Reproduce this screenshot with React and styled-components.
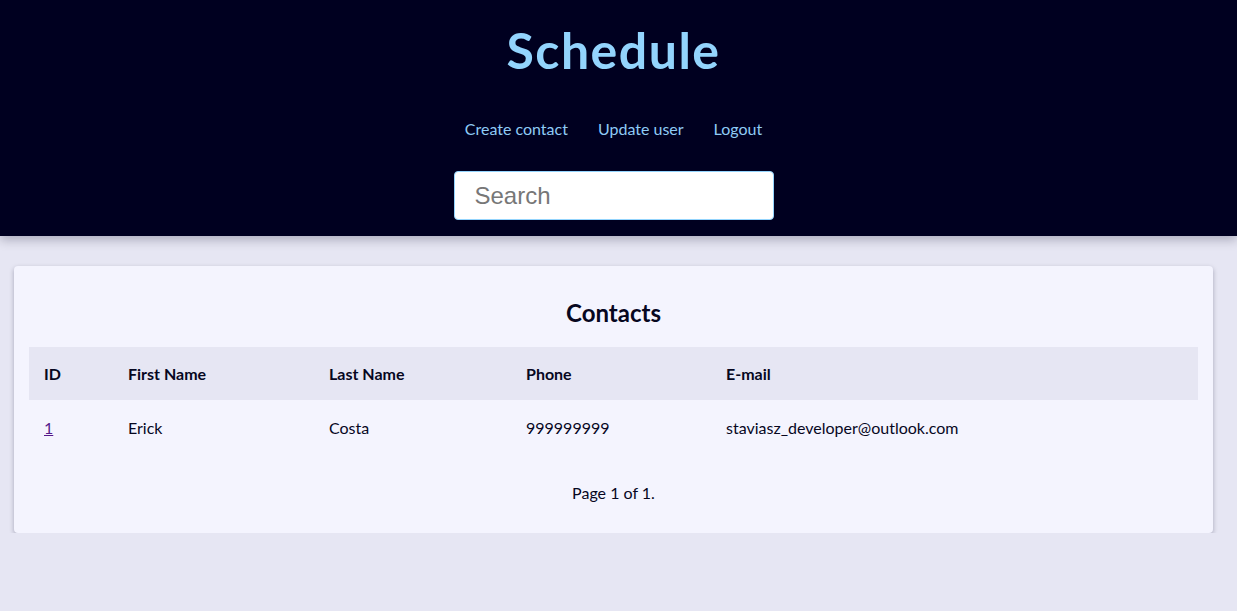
import React from "react";
import styled, { createGlobalStyle } from "styled-components";

const contacts = [
  { id: 1, firstName: "Erick", lastName: "Costa", phone: "999999999", email: "staviasz_developer@outlook.com" },
];

const columns = [
  { label: "ID", width: 84 },
  { label: "First Name", width: 201 },
  { label: "Last Name", width: 197 },
  { label: "Phone", width: 200 },
  { label: "E-mail", width: null },
];

const App = () => {
  return (
    <>
      <GlobalStyle />
      <Header>
        <Title>Schedule</Title>
        <Nav>
          <NavLink href="#">Create contact</NavLink>
          <NavLink href="#">Update user</NavLink>
          <NavLink href="#">Logout</NavLink>
        </Nav>
        <SearchInput placeholder="Search" />
      </Header>
      <Main>
        <Card>
          <CardTitle>Contacts</CardTitle>
          <Table>
            <colgroup>
              {columns.map((c) => (
                <col key={c.label} style={c.width ? { width: c.width } : undefined} />
              ))}
            </colgroup>
            <thead>
              <HeadRow>
                {columns.map((c) => (
                  <Th key={c.label}>{c.label}</Th>
                ))}
              </HeadRow>
            </thead>
            <tbody>
              {contacts.map((c) => (
                <tr key={c.id}>
                  <Td>
                    <IdLink href="#">{c.id}</IdLink>
                  </Td>
                  <Td>{c.firstName}</Td>
                  <Td>{c.lastName}</Td>
                  <Td>{c.phone}</Td>
                  <Td>{c.email}</Td>
                </tr>
              ))}
            </tbody>
          </Table>
          <Pager>Page 1 of 1.</Pager>
        </Card>
      </Main>
    </>
  );
};

const GlobalStyle = createGlobalStyle`
  * { box-sizing: border-box; }
  body {
    margin: 0;
    background: #e6e6f3;
    font-family: Lato, "Open Sans", sans-serif;
    color: #07071f;
  }
`;

const Header = styled.header`
  background: #000020;
  height: 236px;
  padding: 20px 10px 16px 0;
  display: flex;
  flex-direction: column;
  align-items: center;
  box-shadow: 0 4px 10px rgba(0, 0, 32, 0.25);
`;

const Title = styled.h1`
  margin: 0;
  font-size: 50px;
  line-height: 60px;
  font-weight: 700;
  letter-spacing: 1.5px;
  color: #93d4fd;
`;

const Nav = styled.nav`
  margin-top: 39px;
  display: flex;
  gap: 30px;
`;

const NavLink = styled.a`
  font-size: 16px;
  line-height: 20px;
  color: #8fcbf5;
  text-decoration: none;
`;

const SearchInput = styled.input`
  margin-top: 32px;
  width: 320px;
  height: 50px;
  border: 1px solid #93d4fd;
  border-radius: 4px;
  padding: 0 20px;
  font-family: "Liberation Sans", Arial, sans-serif;
  font-size: 24px;
  background: #fff;

  &::placeholder {
    color: #777;
  }
  &:focus {
    outline: none;
  }
`;

const Main = styled.main`
  padding: 30px 24px 0 14px;
`;

const Card = styled.section`
  background: #f4f4fe;
  border-radius: 4px;
  box-shadow: 0 2px 5px rgba(0, 0, 40, 0.28);
  padding: 33px 15px 30px;
`;

const CardTitle = styled.h2`
  margin: 0 0 20px;
  text-align: center;
  font-size: 24px;
  line-height: 28px;
  font-weight: 700;
`;

const Table = styled.table`
  width: 100%;
  border-collapse: collapse;
  table-layout: fixed;
`;

const HeadRow = styled.tr`
  background: #e6e6f3;
`;

const Th = styled.th`
  text-align: left;
  height: 53px;
  padding: 0 15px;
  font-size: 16px;
  font-weight: 700;
`;

const Td = styled.td`
  height: 54px;
  padding: 0 15px;
  font-size: 16px;
`;

const IdLink = styled.a`
  color: #551a8b;
`;

const Pager = styled.p`
  margin: 29px 0 0;
  text-align: center;
  font-size: 16px;
  line-height: 20px;
`;

export default App;
